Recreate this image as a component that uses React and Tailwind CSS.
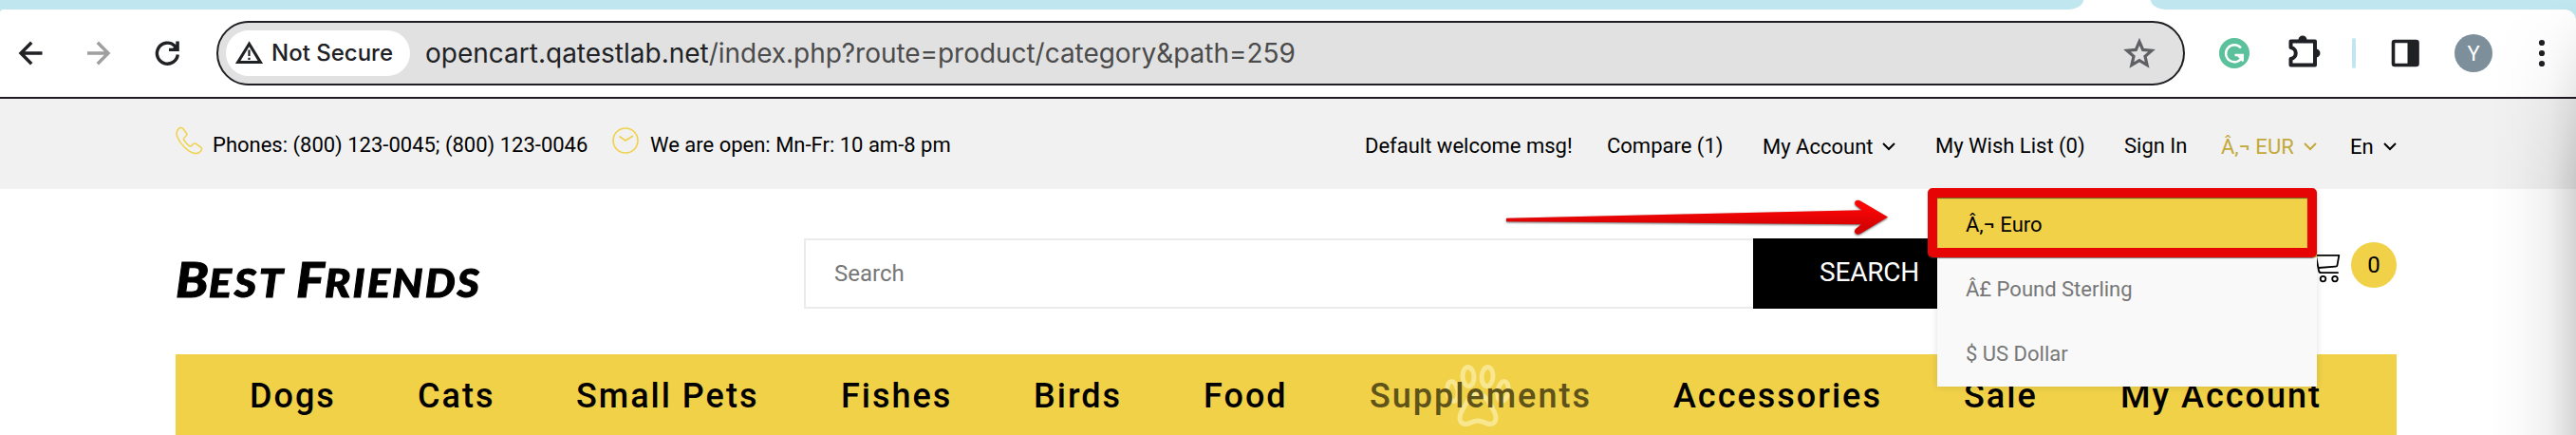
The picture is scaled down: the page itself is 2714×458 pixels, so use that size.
import React from "react";

const chevron = (
  <svg width="14" height="9" viewBox="0 0 14 9" fill="none" stroke="currentColor" strokeWidth="2">
    <path d="M1 1l6 6 6-6" />
  </svg>
);

function BrowserBar() {
  return (
    <div className="bg-[#c0e6f0]">
      <div className="flex h-[10px] overflow-hidden">
        <div className="w-[2162px]" />
        <div className="flex flex-1 bg-white">
          <div className="h-[10px] w-[33px] rounded-br-[20px_12px] bg-[#c0e6f0]" />
          <div className="w-[71px]" />
          <div className="h-[10px] flex-1 rounded-bl-[20px_12px] bg-[#c0e6f0]" />
        </div>
      </div>
      <div className="flex h-[94px] items-start rounded-tl-[4px] rounded-tr-[12px] border-b-2 border-[#1f1a24] bg-white pt-3">
        <svg className="h-[68px] w-[228px] shrink-0" viewBox="0 22 228 68" fill="none" strokeWidth="3.4">
          <path d="M44.5 56H23M33.2 44.8L22 56l11.2 11.2" stroke="#202124" />
          <path d="M92 56h21.500M102.800 44.800L114 56l-11.200 11.200" stroke="#9f9f9f" />
          <path d="M187.300 57.500a11 11 0 1 1-3.500-9.500l2.800 2.800" stroke="#202124" />
          <path d="M188.800 43.500V54H178v-3.200h4l3.300-3.300v-4z" fill="#202124" />
        </svg>
        <div className="flex h-[68px] w-[2074px] shrink-0 items-center rounded-full border-2 border-[#1f1f24] bg-[#e1e1e1] pl-2 font-[Inter,sans-serif]">
          <div className="flex h-12 w-[194px] items-center rounded-full bg-white pl-[9px]">
            <svg width="31" height="26" viewBox="0 0 31 26" fill="none" stroke="#202124">
              <path d="M15.500 3.200L3.600 22.600h23.800z" strokeWidth="3" />
              <path d="M15.500 9.500v6.500M15.500 17.800v2.200" strokeWidth="2.200" />
            </svg>
            <span className="ml-[8px] text-[24px] font-medium text-[#202124]">Not Secure</span>
          </div>
          <div className="ml-[16px] flex-1 text-[28px] whitespace-pre text-[#202124]">
            opencart.qatestlab.net<span className="tracking-[-0.04px] text-[#4b4b4b]">/index.php?route=product/category&amp;path=259</span>
          </div>
          <svg className="mr-[28px]" width="36" height="34" viewBox="0 0 36 34" fill="none" stroke="#5f6063" strokeWidth="3.200">
            <path d="M18 4.800l3.700 8.600 9.300.8-7 6.200 2.100 9.100-8.100-4.900-8.100 4.900 2.100-9.100-7-6.200 9.300-.8z" />
          </svg>
        </div>
        <svg className="h-[68px] w-[412px]" viewBox="2302 22 412 68">
          <circle cx="2354" cy="56" r="16" fill="#5ac19c" />
          <path d="M2361 50.500a9 9 0 1 0 1.500 9M2354.500 58h8.300v6.500" fill="none" stroke="#fff" strokeWidth="2.400" />
          <path d="M2356 58h7v7z" fill="#fff" />
          <path d="M2413.500 43.500h25.500v25h-25.500v-6.500c7-1 7-11 0-12z" fill="none" stroke="#202124" strokeWidth="4" strokeLinejoin="round" />
          <path d="M2421.500 42a4.500 4.500 0 0 1 9 0zM2440 51.500a4.500 4.500 0 0 1 0 9z" fill="#202124" />
          <rect x="2478" y="40" width="4" height="32" rx="2" fill="#c0e6f0" />
          <rect x="2521.500" y="43.500" width="25.500" height="25" rx="1.500" fill="none" stroke="#202124" strokeWidth="3.600" />
          <path d="M2536.500 43h11v26h-11z" fill="#202124" />
          <circle cx="2606" cy="56" r="20" fill="#7c8f9b" />
          <text x="2606" y="64" textAnchor="middle" fill="#fff" className="font-[Roboto,sans-serif] text-[22px]">Y</text>
          <g fill="#202124">
            <circle cx="2678" cy="45" r="3.100" />
            <circle cx="2678" cy="56" r="3.100" />
            <circle cx="2678" cy="67" r="3.100" />
          </g>
        </svg>
      </div>
    </div>
  );
}

function TopBar() {
  return (
    <div className="flex h-[95px] items-center bg-[#f1f1f1] pl-[185px] text-[22px] leading-[26px] whitespace-nowrap text-black">
      <svg className="mb-[7px] shrink-0" width="29" height="30" viewBox="0 0 29 30" fill="none" stroke="#f0d148" strokeWidth="1.500" strokeLinejoin="round">
        <path d="M2.500 3.500C4 1.500 6 .8 7.500 2l4.200 5.800c.6 1.300-.2 2.200-1.700 3.200-2.400 1.800-1.800 3.200 1.300 6.800 3.500 3.700 4.600 4.200 6.300 1.900 1.100-1.500 2.200-2.200 3.600-1.500l5.300 3.700c1.500 1.100 1.200 2.700.2 4-1.700 2.300-4 3.400-7.900 2.300C12.500 26.300 4.300 18.200 1.600 10.600.5 7.500 1 5.500 2.500 3.500z" />
      </svg>
      <span className="ml-[10px] w-[421px] pt-[2px]">Phones: (800) 123-0045; (800) 123-0046</span>
      <svg className="mb-[7px] shrink-0" width="28" height="28" viewBox="0 0 28 28" fill="none" stroke="#f0d148" strokeWidth="1.600">
        <circle cx="14" cy="14" r="13" />
        <path d="M7.500 9.500l6.500 4.500 8-5" />
      </svg>
      <span className="ml-[12px] w-[753px] pt-[2px]">We are open: Mn-Fr: 10 am-8 pm</span>
      <span className="w-[255px] pt-[4px]">Default welcome msg!</span>
      <span className="w-[164px] pt-[4px]">Compare (1)</span>
      <span className="flex w-[182px] items-center gap-[10px] pt-[6px]">My Account {chevron}</span>
      <span className="w-[199px] pt-[4px]">My Wish List (0)</span>
      <span className="w-[102px] pt-[4px]">Sign In</span>
      <span className="flex w-[136px] items-center gap-[10px] pt-[6px] text-[#c2a939]">Â‚¬ EUR {chevron}</span>
      <span className="flex items-center gap-[10px] pt-[6px]">En {chevron}</span>
    </div>
  );
}

function SearchRow() {
  return (
    <div className="flex h-[174px] items-center pt-[4px] pl-[185px]">
      <div className="flex w-[662px] origin-left scale-x-110 items-baseline pt-[10px] font-[Lato,sans-serif] text-[41px] leading-none font-black whitespace-pre text-black uppercase italic [-webkit-text-stroke:1px_black]">
        <span className="text-[51px]">B</span>
        <span className="tracking-[2.500px]">est </span>
        <span className="text-[51px]">F</span>
        <span className="tracking-[2px]">riends</span>
      </div>
      <div className="flex h-[74px]">
        <div className="flex w-[1000px] items-center border-2 border-r-0 border-[#ebebeb] pl-[30px] text-[24px] text-[#777]">Search</div>
        <div className="flex w-[243px] items-center bg-black pb-[2px] pl-[70px] text-[28px] tracking-[-0.200px] text-white">SEARCH</div>
      </div>
      <svg className="-mt-[12px] ml-[334px] shrink-0" width="42" height="36" viewBox="2424 264 42 36" fill="none" stroke="#000" strokeWidth="1.800" strokeLinejoin="round" strokeLinecap="round">
        <path d="M2434 264h5l4 21c.3 1.600 1 2.200 2.500 2.200H2463M2440.500 268.800H2464.300l-1.800 10.400c-.2 1-.8 1.400-2 1.500L2442.500 282" />
        <circle cx="2447.500" cy="293.600" r="2.800" />
        <circle cx="2460" cy="293.600" r="2.800" />
      </svg>
      <div className="-mt-[18px] ml-[11px] flex h-[48px] w-[48px] items-center justify-center rounded-full bg-[#f0d148] text-[24px] text-black">0</div>
    </div>
  );
}

function CategoryNav() {
  return (
    <div className="mx-[185px] flex h-[88px] w-[2340px] items-center bg-[#f0d148] pl-[78px] text-[36px] leading-[42px] font-medium tracking-[2px] whitespace-nowrap text-black">
      <span className="w-[177px]">Dogs</span>
      <span className="w-[167px]">Cats</span>
      <span className="w-[279px]">Small Pets</span>
      <span className="w-[203px]">Fishes</span>
      <span className="w-[179px]">Birds</span>
      <span className="w-[175px]">Food</span>
      <span className="relative w-[320px] text-[#605319]">
        <svg className="absolute -top-[14px] left-[78px]" width="72" height="72" viewBox="1521 382 72 72" fill="none" stroke="#f8e78f" strokeWidth="5">
          <ellipse cx="1547" cy="396.500" rx="6" ry="10" transform="rotate(-4 1547 396.500)" />
          <ellipse cx="1567" cy="396.500" rx="6" ry="10" transform="rotate(4 1567 396.500)" />
          <ellipse cx="1530.500" cy="412" rx="5.500" ry="10.500" transform="rotate(-10 1530.500 412)" />
          <ellipse cx="1583.500" cy="412" rx="5.500" ry="10.500" transform="rotate(10 1583.500 412)" />
          <path d="M1557 415c-6 0-10 5-13 11-3 5-6 9-6 14 0 4.500 3 7 7 6.500 4-.6 7-3.500 12-3.500s8 2.900 12 3.500c4 .5 7-2 7-6.500 0-5-3-9-6-14-3-6-7-11-13-11z" />
        </svg>
        <span className="relative">Supplements</span>
      </span>
      <span className="w-[306px]">Accessories</span>
      <span className="w-[165px]">Sale</span>
      <span>My Account</span>
    </div>
  );
}

function CurrencyMenu() {
  return (
    <div className="absolute top-[202px] left-[2041px] w-[400px] bg-[#f9f9f9] text-[22px] text-[#777] shadow-[0_0_8px_rgba(0,0,0,0.12)]">
      <div className="flex h-[69px] items-center bg-[#f0d148] pl-[30px] text-black">Â‚¬ Euro</div>
      <div className="flex h-[68px] items-center pb-[2px] pl-[30px]">Â£ Pound Sterling</div>
      <div className="flex h-[68px] items-center pb-[2px] pl-[30px]">$ US Dollar</div>
      <div className="absolute -top-[4px] -left-[10px] h-[73px] w-[410px] rounded-[5px] border-[10px] border-[#e60404] shadow-[0_1px_1px_rgba(60,60,60,0.7),inset_0_1px_1px_rgba(70,60,10,0.8)]" />
    </div>
  );
}

export default function App() {
  return (
    <div className="relative h-[458px] w-[2714px] overflow-hidden bg-white font-[Roboto,sans-serif]">
      <BrowserBar />
      <TopBar />
      <SearchRow />
      <CategoryNav />
      <CurrencyMenu />
      <svg className="absolute top-[205px] left-[1580px]" width="416" height="50" viewBox="1580 205 416 50">
        <defs>
          <linearGradient id="arrowRed" x1="0" y1="0" x2="0" y2="1">
            <stop offset="0.2" stopColor="#fb0606" />
            <stop offset="0.8" stopColor="#d40202" />
          </linearGradient>
        </defs>
        <g className="drop-shadow-[0_1px_1px_rgba(0,0,0,0.6)]">
          <path d="M1587 229.800L1961.500 221.300 1955.500 216.500C1952 213 1956 209 1960 211.500L1989 228.500 1960 246C1956 248.500 1952 244.500 1955 241L1961 236.200 1587 233.200z" fill="url(#arrowRed)" />
        </g>
      </svg>
      <div className="pointer-events-none absolute top-0 right-0 h-full w-[90px] bg-[linear-gradient(to_right,transparent,rgba(0,0,0,0.02)_35%,rgba(0,0,0,0.06)_70%,rgba(0,0,0,0.17))] [mask-image:linear-gradient(to_bottom,transparent,black_190px)]" />
    </div>
  );
}
